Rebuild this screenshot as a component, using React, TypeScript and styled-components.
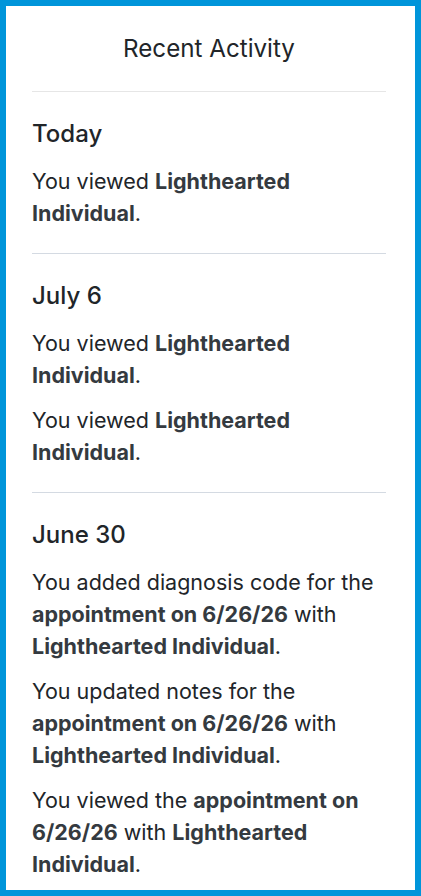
import React from 'react'
import styled, {createGlobalStyle} from 'styled-components'

const GlobalStyle = createGlobalStyle`
  * { box-sizing: border-box; }
  html, body { margin: 0; padding: 0; background: #ffffff; }
  body {
    font-family: Inter, "Noto Sans", "Liberation Sans", sans-serif;
    color: #212529;
  }
`

type Entry = React.ReactNode
type Group = {date: string; entries: Entry[]}

const LH = 'Lighthearted Individual'

const groups: Group[] = [
  {
    date: 'Today',
    entries: [<>You viewed <b>{LH}</b>.</>],
  },
  {
    date: 'July 6',
    entries: [
      <>You viewed <b>{LH}</b>.</>,
      <>You viewed <b>{LH}</b>.</>,
    ],
  },
  {
    date: 'June 30',
    entries: [
      <>You added diagnosis code for the <b>appointment on 6/26/26</b> with <b>{LH}</b>.</>,
      <>You updated notes for the <b>appointment on 6/26/26</b> with <b>{LH}</b>.</>,
      <>You viewed the <b>appointment on 6/26/26</b> with <b>{LH}</b>.</>,
    ],
  },
]

const App = () => {
  return (
    <>
      <GlobalStyle />
      <StyledFrame>
        <StyledPanel>
          <StyledTitle>Recent Activity</StyledTitle>
          {groups.map((group) => (
            <StyledSection key={group.date}>
              <StyledDate>{group.date}</StyledDate>
              {group.entries.map((entry, i) => (
                <StyledEntry key={i}>{entry}</StyledEntry>
              ))}
            </StyledSection>
          ))}
        </StyledPanel>
      </StyledFrame>
    </>
  )
}

const StyledFrame = styled.div`
  width: 421px;
  height: 896px;
  border: 6px solid #0095da;
  overflow: hidden;
  background: #ffffff;
`

const StyledPanel = styled.div`
  padding: 0 29px 0 26px;
`

const StyledTitle = styled.h2`
  margin: 0;
  padding: 25px 0 24px;
  font-size: 24.2px;
  line-height: 36px;
  font-weight: 400;
  text-align: center;
  color: #212529;
  border-bottom: 1px solid #e6e6e6;
`

const StyledSection = styled.section`
  padding: 24px 0;
  border-bottom: 1px solid #d4dae2;

  &:last-child {
    border-bottom: none;
  }
`

const StyledDate = styled.h3`
  margin: 0 0 13px;
  font-size: 24px;
  line-height: 36px;
  font-weight: 500;
  color: #212529;
`

const StyledEntry = styled.p`
  margin: 0 0 13px;
  font-size: 21.5px;
  line-height: 32px;
  font-weight: 400;
  color: #212529;

  &:last-child {
    margin-bottom: 0;
  }

  b {
    font-weight: 700;
    color: #343a40;
  }
`

export default App
